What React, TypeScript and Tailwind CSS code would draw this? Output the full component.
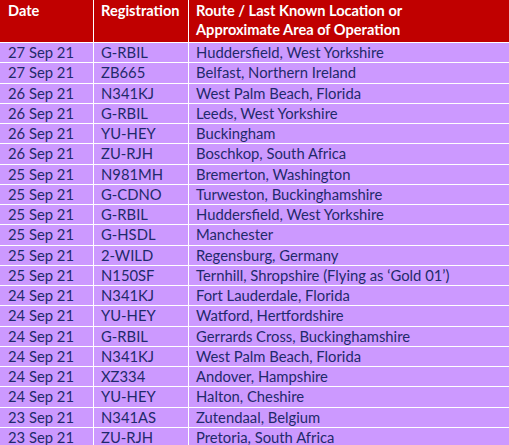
const ROWS = [
  ['27 Sep 21', 'G-RBIL', 'Huddersfield, West Yorkshire'],
  ['27 Sep 21', 'ZB665', 'Belfast, Northern Ireland'],
  ['26 Sep 21', 'N341KJ', 'West Palm Beach, Florida'],
  ['26 Sep 21', 'G-RBIL', 'Leeds, West Yorkshire'],
  ['26 Sep 21', 'YU-HEY', 'Buckingham'],
  ['26 Sep 21', 'ZU-RJH', 'Boschkop, South Africa'],
  ['25 Sep 21', 'N981MH', 'Bremerton, Washington'],
  ['25 Sep 21', 'G-CDNO', 'Turweston, Buckinghamshire'],
  ['25 Sep 21', 'G-RBIL', 'Huddersfield, West Yorkshire'],
  ['25 Sep 21', 'G-HSDL', 'Manchester'],
  ['25 Sep 21', '2-WILD', 'Regensburg, Germany'],
  ['25 Sep 21', 'N150SF', 'Ternhill, Shropshire (Flying as \u2018Gold 01\u2019)'],
  ['24 Sep 21', 'N341KJ', 'Fort Lauderdale, Florida'],
  ['24 Sep 21', 'YU-HEY', 'Watford, Hertfordshire'],
  ['24 Sep 21', 'G-RBIL', 'Gerrards Cross, Buckinghamshire'],
  ['24 Sep 21', 'N341KJ', 'West Palm Beach, Florida'],
  ['24 Sep 21', 'XZ334', 'Andover, Hampshire'],
  ['24 Sep 21', 'YU-HEY', 'Halton, Cheshire'],
  ['23 Sep 21', 'N341AS', 'Zutendaal, Belgium'],
  ['23 Sep 21', 'ZU-RJH', 'Pretoria, South Africa'],
];

export default function App() {
  return (
    <div className="w-[509px] h-[445px] overflow-hidden bg-white font-['Lato',sans-serif]">
      <div className="grid grid-cols-[93px_94px_1fr] gap-px bg-white">
        <div className="h-[42px] bg-[#c00000] px-[8px] pt-[1px] text-[14.6px] leading-[19px] font-bold text-white">Date</div>
        <div className="h-[42px] bg-[#c00000] px-[7px] pt-[1px] text-[14.6px] leading-[19px] font-bold text-white">Registration</div>
        <div className="h-[42px] bg-[#c00000] px-[7px] pt-[1px] text-[14.6px] leading-[19px] font-bold text-white">
          Route / Last Known Location or<br />
          Approximate Area of Operation
        </div>
        {ROWS.map((row, i) => (
          <div key={i} className="contents">
            <div className="h-[19.26px] bg-[#cc99ff] px-[8px] text-[14.8px] leading-[19px] text-[#1f2a6b] whitespace-nowrap">{row[0]}</div>
            <div className="h-[19.26px] bg-[#cc99ff] px-[7px] text-[14.8px] leading-[19px] text-[#1f2a6b] whitespace-nowrap">{row[1]}</div>
            <div className="h-[19.26px] bg-[#cc99ff] px-[7px] text-[14.8px] leading-[19px] text-[#1f2a6b] whitespace-nowrap">{row[2]}</div>
          </div>
        ))}
      </div>
    </div>
  );
}
